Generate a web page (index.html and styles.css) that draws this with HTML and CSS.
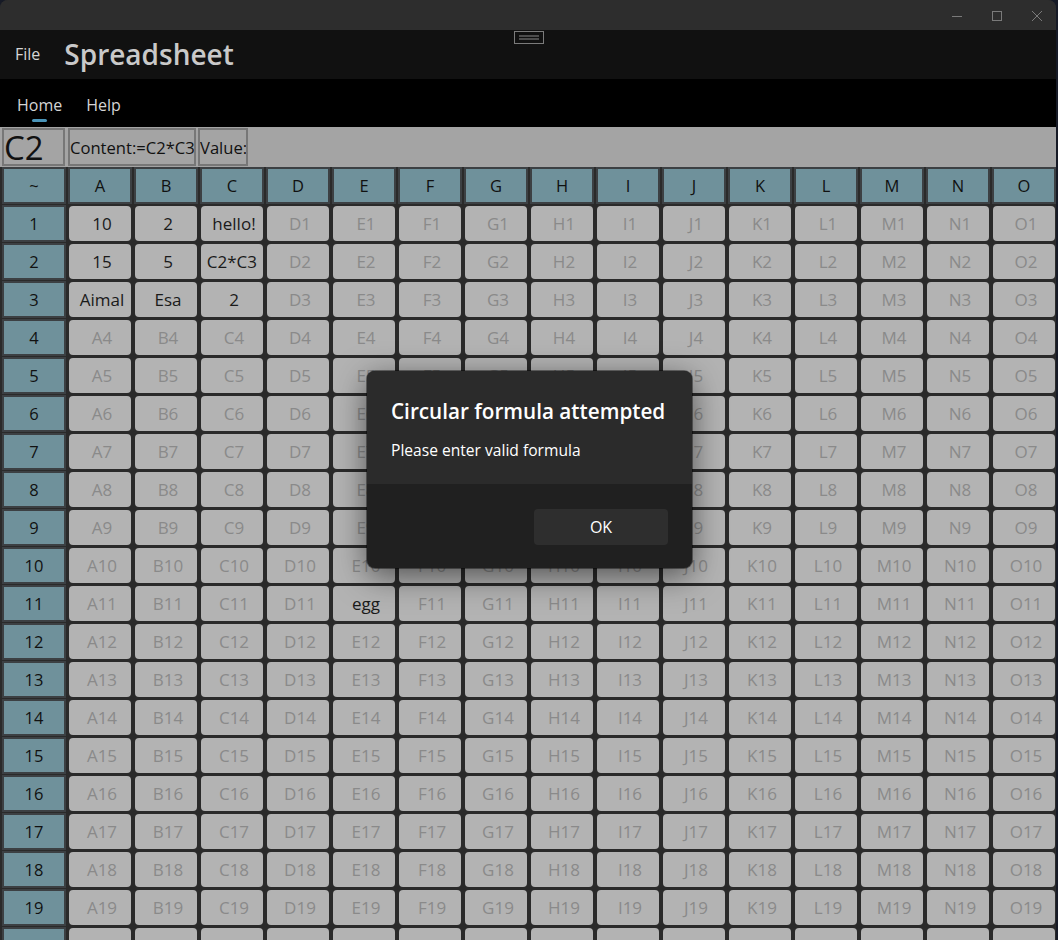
FILE: index.html
```html
<!DOCTYPE html>
<html>
<head>
<meta charset="utf-8">
<link rel="stylesheet" href="styles.css">
</head>
<body>
<div class="window">
  <div class="titlebar">
    <div class="winctl">
      <svg width="12" height="12" viewBox="0 0 12 12"><path d="M1 6.5h10" stroke="#7a7a7a" stroke-width="1"/></svg>
      <svg width="12" height="12" viewBox="0 0 12 12"><rect x="1.5" y="1.5" width="9" height="9" fill="none" stroke="#7a7a7a" stroke-width="1"/></svg>
      <svg width="12" height="12" viewBox="0 0 12 12"><path d="M1 1L11 11M11 1L1 11" stroke="#7a7a7a" stroke-width="1"/></svg>
    </div>
  </div>
  <div class="menubar">
    <span class="file">File</span>
    <span class="apptitle">Spreadsheet</span>
    <svg class="handle" width="30" height="13" viewBox="0 0 30 13"><rect x="0.5" y="0.5" width="29" height="12" fill="none" stroke="#7b7b7b"/><path d="M5 5h20M5 8h20" stroke="#8a8a8a"/></svg>
  </div>
  <div class="navbar">
    <span class="tab active">Home</span>
    <span class="tab">Help</span>
  </div>
  <div class="formulabar">
    <div class="fbox name">C2</div>
    <div class="fbox content">Content:=C2*C3</div>
    <div class="fbox value">Value:</div>
  </div>
  <div class="grid">
    <div class="h">~</div><div class="h">A</div><div class="h">B</div><div class="h">C</div><div class="h">D</div><div class="h">E</div><div class="h">F</div><div class="h">G</div><div class="h">H</div><div class="h">I</div><div class="h">J</div><div class="h">K</div><div class="h">L</div><div class="h">M</div><div class="h">N</div><div class="h">O</div>

    <div class="h">1</div><div class="c v">10</div><div class="c v">2</div><div class="c v">hello!</div><div class="c">D1</div><div class="c">E1</div><div class="c">F1</div><div class="c">G1</div><div class="c">H1</div><div class="c">I1</div><div class="c">J1</div><div class="c">K1</div><div class="c">L1</div><div class="c">M1</div><div class="c">N1</div><div class="c">O1</div>

    <div class="h">2</div><div class="c v">15</div><div class="c v">5</div><div class="c v clip"><div class="clipbox"><span>=C2*C3</span></div></div><div class="c">D2</div><div class="c">E2</div><div class="c">F2</div><div class="c">G2</div><div class="c">H2</div><div class="c">I2</div><div class="c">J2</div><div class="c">K2</div><div class="c">L2</div><div class="c">M2</div><div class="c">N2</div><div class="c">O2</div>

    <div class="h">3</div><div class="c v">Aimal</div><div class="c v">Esa</div><div class="c v">2</div><div class="c">D3</div><div class="c">E3</div><div class="c">F3</div><div class="c">G3</div><div class="c">H3</div><div class="c">I3</div><div class="c">J3</div><div class="c">K3</div><div class="c">L3</div><div class="c">M3</div><div class="c">N3</div><div class="c">O3</div>

    <div class="h">4</div><div class="c">A4</div><div class="c">B4</div><div class="c">C4</div><div class="c">D4</div><div class="c">E4</div><div class="c">F4</div><div class="c">G4</div><div class="c">H4</div><div class="c">I4</div><div class="c">J4</div><div class="c">K4</div><div class="c">L4</div><div class="c">M4</div><div class="c">N4</div><div class="c">O4</div>

    <div class="h">5</div><div class="c">A5</div><div class="c">B5</div><div class="c">C5</div><div class="c">D5</div><div class="c">E5</div><div class="c">F5</div><div class="c">G5</div><div class="c">H5</div><div class="c">I5</div><div class="c">J5</div><div class="c">K5</div><div class="c">L5</div><div class="c">M5</div><div class="c">N5</div><div class="c">O5</div>

    <div class="h">6</div><div class="c">A6</div><div class="c">B6</div><div class="c">C6</div><div class="c">D6</div><div class="c">E6</div><div class="c">F6</div><div class="c">G6</div><div class="c">H6</div><div class="c">I6</div><div class="c">J6</div><div class="c">K6</div><div class="c">L6</div><div class="c">M6</div><div class="c">N6</div><div class="c">O6</div>

    <div class="h">7</div><div class="c">A7</div><div class="c">B7</div><div class="c">C7</div><div class="c">D7</div><div class="c">E7</div><div class="c">F7</div><div class="c">G7</div><div class="c">H7</div><div class="c">I7</div><div class="c">J7</div><div class="c">K7</div><div class="c">L7</div><div class="c">M7</div><div class="c">N7</div><div class="c">O7</div>

    <div class="h">8</div><div class="c">A8</div><div class="c">B8</div><div class="c">C8</div><div class="c">D8</div><div class="c">E8</div><div class="c">F8</div><div class="c">G8</div><div class="c">H8</div><div class="c">I8</div><div class="c">J8</div><div class="c">K8</div><div class="c">L8</div><div class="c">M8</div><div class="c">N8</div><div class="c">O8</div>

    <div class="h">9</div><div class="c">A9</div><div class="c">B9</div><div class="c">C9</div><div class="c">D9</div><div class="c">E9</div><div class="c">F9</div><div class="c">G9</div><div class="c">H9</div><div class="c">I9</div><div class="c">J9</div><div class="c">K9</div><div class="c">L9</div><div class="c">M9</div><div class="c">N9</div><div class="c">O9</div>

    <div class="h">10</div><div class="c">A10</div><div class="c">B10</div><div class="c">C10</div><div class="c">D10</div><div class="c">E10</div><div class="c">F10</div><div class="c">G10</div><div class="c">H10</div><div class="c">I10</div><div class="c">J10</div><div class="c">K10</div><div class="c">L10</div><div class="c">M10</div><div class="c">N10</div><div class="c">O10</div>

    <div class="h">11</div><div class="c">A11</div><div class="c">B11</div><div class="c">C11</div><div class="c">D11</div><div class="c v">egg</div><div class="c">F11</div><div class="c">G11</div><div class="c">H11</div><div class="c">I11</div><div class="c">J11</div><div class="c">K11</div><div class="c">L11</div><div class="c">M11</div><div class="c">N11</div><div class="c">O11</div>

    <div class="h">12</div><div class="c">A12</div><div class="c">B12</div><div class="c">C12</div><div class="c">D12</div><div class="c">E12</div><div class="c">F12</div><div class="c">G12</div><div class="c">H12</div><div class="c">I12</div><div class="c">J12</div><div class="c">K12</div><div class="c">L12</div><div class="c">M12</div><div class="c">N12</div><div class="c">O12</div>

    <div class="h">13</div><div class="c">A13</div><div class="c">B13</div><div class="c">C13</div><div class="c">D13</div><div class="c">E13</div><div class="c">F13</div><div class="c">G13</div><div class="c">H13</div><div class="c">I13</div><div class="c">J13</div><div class="c">K13</div><div class="c">L13</div><div class="c">M13</div><div class="c">N13</div><div class="c">O13</div>

    <div class="h">14</div><div class="c">A14</div><div class="c">B14</div><div class="c">C14</div><div class="c">D14</div><div class="c">E14</div><div class="c">F14</div><div class="c">G14</div><div class="c">H14</div><div class="c">I14</div><div class="c">J14</div><div class="c">K14</div><div class="c">L14</div><div class="c">M14</div><div class="c">N14</div><div class="c">O14</div>

    <div class="h">15</div><div class="c">A15</div><div class="c">B15</div><div class="c">C15</div><div class="c">D15</div><div class="c">E15</div><div class="c">F15</div><div class="c">G15</div><div class="c">H15</div><div class="c">I15</div><div class="c">J15</div><div class="c">K15</div><div class="c">L15</div><div class="c">M15</div><div class="c">N15</div><div class="c">O15</div>

    <div class="h">16</div><div class="c">A16</div><div class="c">B16</div><div class="c">C16</div><div class="c">D16</div><div class="c">E16</div><div class="c">F16</div><div class="c">G16</div><div class="c">H16</div><div class="c">I16</div><div class="c">J16</div><div class="c">K16</div><div class="c">L16</div><div class="c">M16</div><div class="c">N16</div><div class="c">O16</div>

    <div class="h">17</div><div class="c">A17</div><div class="c">B17</div><div class="c">C17</div><div class="c">D17</div><div class="c">E17</div><div class="c">F17</div><div class="c">G17</div><div class="c">H17</div><div class="c">I17</div><div class="c">J17</div><div class="c">K17</div><div class="c">L17</div><div class="c">M17</div><div class="c">N17</div><div class="c">O17</div>

    <div class="h">18</div><div class="c">A18</div><div class="c">B18</div><div class="c">C18</div><div class="c">D18</div><div class="c">E18</div><div class="c">F18</div><div class="c">G18</div><div class="c">H18</div><div class="c">I18</div><div class="c">J18</div><div class="c">K18</div><div class="c">L18</div><div class="c">M18</div><div class="c">N18</div><div class="c">O18</div>

    <div class="h">19</div><div class="c">A19</div><div class="c">B19</div><div class="c">C19</div><div class="c">D19</div><div class="c">E19</div><div class="c">F19</div><div class="c">G19</div><div class="c">H19</div><div class="c">I19</div><div class="c">J19</div><div class="c">K19</div><div class="c">L19</div><div class="c">M19</div><div class="c">N19</div><div class="c">O19</div>

    <div class="h">20</div><div class="c">A20</div><div class="c">B20</div><div class="c">C20</div><div class="c">D20</div><div class="c">E20</div><div class="c">F20</div><div class="c">G20</div><div class="c">H20</div><div class="c">I20</div><div class="c">J20</div><div class="c">K20</div><div class="c">L20</div><div class="c">M20</div><div class="c">N20</div><div class="c">O20</div>
  </div>

  <div class="dialog">
    <div class="dlg-body">
      <div class="dlg-title">Circular formula attempted</div>
      <div class="dlg-text">Please enter valid formula</div>
    </div>
    <div class="dlg-foot">
      <button class="ok">OK</button>
    </div>
  </div>
</div>
</body>
</html>
```

FILE: styles.css
```css
* { box-sizing: border-box; }
html, body { margin: 0; padding: 0; }
body {
  width: 1058px;
  height: 940px;
  overflow: hidden;
  background: #161a26;
  font-family: "Open Sans", "Noto Sans", sans-serif;
}
.window {
  position: relative;
  width: 1056px;
  height: 940px;
  overflow: hidden;
  border-radius: 8px 8px 0 0;
  background: #2a2a2a;
}
.titlebar {
  height: 30px;
  background: #2d2d2d;
  display: flex;
  justify-content: flex-end;
  align-items: center;
}
.winctl {
  display: flex;
  gap: 28px;
  padding-right: 13px;
  margin-top: 1px;
}
.winctl svg { display: block; }
.menubar {
  position: relative;
  height: 49px;
  background: #111111;
  display: flex;
  align-items: center;
  padding-left: 15px;
}
.file {
  color: #d6d6d6;
  font-size: 16px;
  margin-right: 24px;
  margin-top: -1px;
}
.apptitle {
  color: #c9c9c9;
  font-size: 28px;
  font-weight: 600;
  margin-top: -2px;
}
.handle {
  position: absolute;
  left: 514px;
  top: 1px;
}
.navbar {
  height: 48px;
  background: #000;
  display: flex;
  align-items: center;
  padding-left: 17px;
  gap: 24px;
}
.tab {
  position: relative;
  color: #d4d4d4;
  font-size: 16px;
  margin-top: 4px;
}
.tab.active::after {
  content: "";
  position: absolute;
  left: 15px;
  width: 15px;
  bottom: -6px;
  height: 3px;
  border-radius: 2px;
  background: #4a94b8;
}
.formulabar {
  height: 40px;
  background: #a4a4a4;
  display: flex;
  align-items: center;
  padding-left: 2px;
  gap: 3px;
}
.fbox {
  height: 38px;
  border: 2px solid #777777;
  color: #111;
  display: flex;
  align-items: center;
  white-space: nowrap;
  overflow: hidden;
}
.fbox.name {
  width: 63px;
  font-size: 33px;
  padding-left: 0;
}
.fbox.content {
  width: 128px;
  font-size: 16.6px;
  padding-left: 0;
}
.fbox.value {
  width: 50px;
  font-size: 16.6px;
  margin-left: -1px;
}
.grid {
  display: grid;
  grid-template-columns: repeat(16, 62px);
  grid-auto-rows: 35px;
  column-gap: 4px;
  row-gap: 3px;
  padding: 1px 0 0 3px;
  background: #2a2a2a;
}
.h {
  background: #6f919b;
  outline: 2px solid #3c4043;
  outline-offset: -1px;
  color: #111;
  font-size: 16.5px;
  display: flex;
  align-items: center;
  justify-content: center;
}
.c {
  background: #b3b3b3;
  border-radius: 4px;
  color: #8a8a8a;
  font-size: 17px;
  display: flex;
  align-items: center;
  justify-content: center;
  padding-left: 4px;
  white-space: nowrap;
  overflow: hidden;
}
.c.v { color: #1a1a1a; }
.c.clip {
  padding-left: 6px;
  padding-right: 6px;
}
.clipbox {
  flex: 1;
  min-width: 0;
  overflow: hidden;
  display: flex;
  justify-content: flex-end;
}
.clipbox span { flex-shrink: 0; }
.dialog {
  position: absolute;
  left: 367px;
  top: 371px;
  width: 325px;
  height: 197px;
  border-radius: 8px;
  overflow: hidden;
  background: #202020;
  box-shadow: 0 8px 32px rgba(0,0,0,0.55), 0 0 0 1px rgba(0,0,0,0.4);
  display: flex;
  flex-direction: column;
}
.dlg-body {
  height: 113px;
  background: #2b2b2b;
  padding: 26px 24px 0 24px;
}
.dlg-title {
  color: #ffffff;
  font-size: 20.7px;
  font-weight: 600;
  line-height: 28px;
}
.dlg-text {
  color: #ffffff;
  font-size: 15.6px;
  line-height: 22px;
  margin-top: 14px;
}
.dlg-foot {
  flex: 1;
  display: flex;
  justify-content: flex-end;
  align-items: flex-start;
  padding: 25px 24px 0 0;
}
.ok {
  width: 134px;
  height: 36px;
  border: none;
  border-radius: 4px;
  background: #2e2e2e;
  color: #ffffff;
  font-family: "Open Sans", "Noto Sans", sans-serif;
  font-size: 16px;
}
```
